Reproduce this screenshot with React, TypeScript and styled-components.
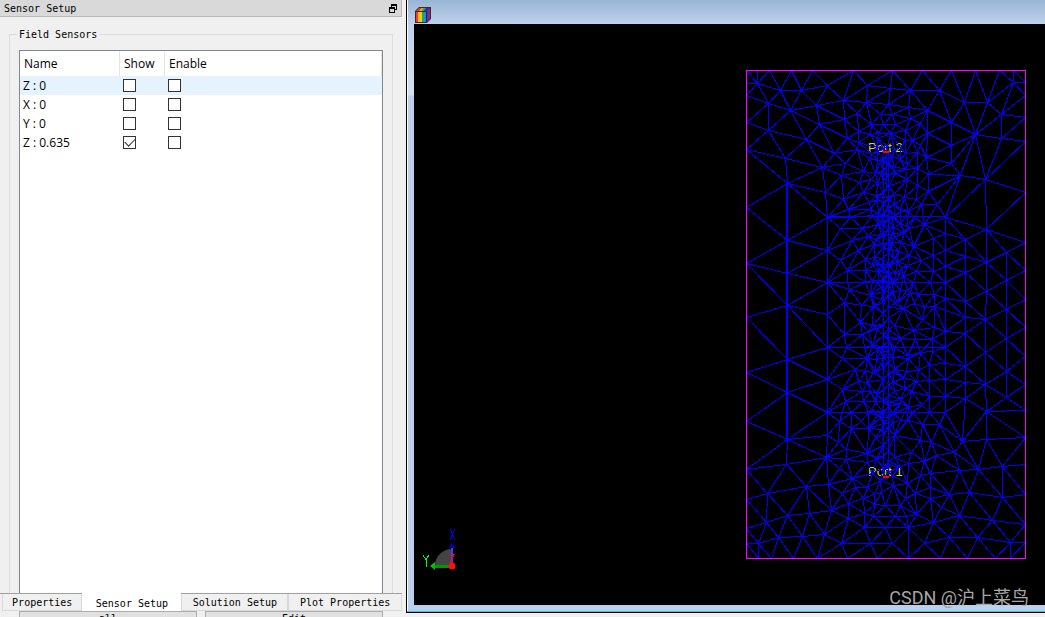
import React, { useState } from "react";
import styled, { createGlobalStyle } from "styled-components";

const GlobalStyle = createGlobalStyle`
  * { box-sizing: border-box; }
  body { margin: 0; background: #f0f0f0; overflow: hidden; }
`;

const mono = `"DejaVu Sans Mono", monospace`;
const sans = `"Open Sans", "Noto Sans", sans-serif`;

const Page = styled.main`
  display: grid;
  grid-template-columns: 402px minmax(0, 1fr);
  column-gap: 4px;
  height: 100vh;
  color: #000;
`;

const Dock = styled.section`
  display: flex;
  flex-direction: column;
  min-height: 0;
  overflow: hidden;
  font: 10px/16px ${mono};
`;

const DockTitle = styled.header`
  display: flex;
  align-items: center;
  justify-content: space-between;
  flex: none;
  height: 17px;
  padding: 0 4px;
  background: #d9d9d9;
  border: solid #b8b8b8;
  border-width: 0 1px 1px 0;
`;

const DockHeading = styled.h1`
  margin: 0;
  padding-top: 2px;
  font: inherit;
`;

const FloatButton = styled.button`
  display: flex;
  padding: 0;
  border: 0;
  background: none;
`;

const GroupWrap = styled.div`
  display: flex;
  flex: 1;
  min-height: 0;
  padding: 8px 9px 0;
`;

const Group = styled.fieldset`
  display: flex;
  flex: 1;
  min-width: 0;
  margin: 0;
  padding: 7px 9px 0;
  border: 1px solid #dcdcdc;
  border-bottom: 0;
`;

const Legend = styled.legend`
  margin-left: -2px;
  padding: 2px 2px 0;
`;

const TableFrame = styled.div`
  flex: 1;
  background: #fff;
  border: 1px solid #828790;
  border-bottom: 0;
`;

const SensorTable = styled.table`
  width: 100%;
  table-layout: fixed;
  border-collapse: separate;
  border-spacing: 0;
  font: 12px/18px ${sans};
`;

const HeadCell = styled.th<{ $width?: number }>`
  width: ${(p) => (p.$width ? `${p.$width}px` : "auto")};
  height: 25px;
  padding: 0 4px;
  border-right: 1px solid #e5e5e5;
  font-weight: 400;
  text-align: left;
`;

const Row = styled.tr<{ $current: boolean }>`
  height: 19px;
  background: ${(p) => (p.$current ? "#e5f3ff" : "#fff")};
`;

const Cell = styled.td`
  padding: 0 3px;
`;

const CheckCell = styled.td`
  padding: 0 3px;
`;

const Check = styled.input`
  display: block;
  appearance: none;
  width: 13px;
  height: 13px;
  margin: 0;
  border: 1px solid #333;
  background: #fff;
  &:checked::after {
    content: "";
    display: block;
    width: 9px;
    height: 5px;
    margin: 2px 0 0 1px;
    border: solid #333;
    border-width: 0 0 1px 1px;
    transform: translateY(-1px) rotate(-45deg);
  }
`;

const TabBar = styled.nav`
  display: flex;
  flex: none;
  height: 18px;
  padding-left: 2px;
  border-top: 1px solid #a0a0a0;
`;

const Tab = styled.button<{ $active: boolean; $grow: number }>`
  flex: ${(p) => p.$grow} 0 0;
  height: ${(p) => (p.$active ? 19 : 17)}px;
  margin-top: ${(p) => (p.$active ? -1 : 0)}px;
  padding: ${(p) => (p.$active ? "4px 1px 0" : "2px 0 0")};
  border: solid #d9d9d9;
  border-width: 0 ${(p) => (p.$active ? 0 : 1)}px 1px;
  background: ${(p) => (p.$active ? "#fff" : "#f0f0f0")};
  color: #000;
  font: inherit;
  line-height: 14px;
  white-space: nowrap;
`;

const ActionRow = styled.div`
  display: grid;
  grid-template-columns: 1fr 1fr;
  gap: 8px;
  flex: none;
  height: 6px;
  padding: 0 19px;
  overflow: hidden;
`;

const Action = styled.button`
  height: 18px;
  padding: 0 0 2px;
  border: 1px solid #adadad;
  background: #e1e1e1;
  color: #000;
  font: inherit;
  line-height: 14px;
`;

const MdiArea = styled.section`
  display: flex;
  flex-direction: column;
  position: relative;
  min-width: 0;
  min-height: 0;
  padding-bottom: 4px;
`;

const MdiWindow = styled.div`
  display: flex;
  flex: 1;
  flex-direction: column;
  min-height: 0;
  padding: 0 0 7px 6px;
  background: linear-gradient(#9ab5d5, #bdd3ec 24px, #d3e0f0 95px, #b9d1ea 96px);
  border: solid #000;
  border-width: 0 0 1px 1px;
  box-shadow: inset 0 -1px 0 #2fc4dc, inset 1px 0 0 #fff;
`;

const MdiTitle = styled.header`
  display: flex;
  align-items: flex-end;
  flex: none;
  height: 24px;
  padding: 0 2px 1px;
`;

const Viewport = styled.div`
  display: flex;
  flex: 1;
  align-items: flex-start;
  justify-content: space-between;
  min-height: 0;
  margin-left: 1px;
  padding: 46px 19px 0 6px;
  background: #000;
`;

const Axes = styled.svg`
  align-self: flex-end;
  flex: none;
  margin-bottom: 28px;
`;

const Drawing = styled.svg`
  display: block;
  flex: none;
`;

const Watermark = styled.span`
  position: absolute;
  right: 16px;
  bottom: 7px;
  color: #a6a6a6;
  font: 18px/24px Roboto, "Noto Sans CJK SC", sans-serif;
`;

type Point = [number, number];

const parse = (text: string): Point[] =>
  text.trim().split(/\s+/).map((pair) => pair.split(",").map(Number) as Point);

/* Mesh nodes, in board coordinates: edges first, then the inside from top to bottom. */
const nodes = parse(`
0,0 11,0 23,0 45,0 66,0 107,0 146,0 176,0 205,0 229,0 253,0 267,0 279,0
0,13 0,25 0,52 0,79 0,137 0,193 0,247 0,302 0,351 0,399 0,429 0,458 0,473 0,488
12,488 25,488 47,488 71,488 101,488 131,488 162,488 194,488 221,488 249,488 264,488 279,488
279,12 279,25 279,47 279,71 279,122 279,172 279,200 279,229 279,257 279,286 279,314 279,340 279,367 279,394 279,424 279,454 279,472
11,13 34,20 55,20 81,15 121,15 22,33 44,40 70,35 97,30 120,32 73,54 98,49 111,43 134,44 22,60 60,69 101,68 112,61 125,54 137,54
39,88 88,83 111,79 124,64 132,63 76,97 99,93 95,105 123,88 117,101 41,113 113,112 125,109 131,90 131,113 112,72 131,77
144,18 164,20 193,20 142,34 162,37 181,40 218,32 241,32 267,12 146,44 164,48 205,52 255,44 149,54 159,60 174,53 181,63 229,64 255,68
166,70 174,75 205,75 159,70 171,82 180,87 159,83 154,89 205,93 214,105 182,104 171,98 159,99 161,109 171,115 239,109 149,103 144,63
41,170 41,203 41,235 79,122 97,129 117,122 81,147 81,180 81,212 81,244 102,139 124,139 104,147 94,158 116,158 106,170 122,166 112,180
94,190 128,174 128,187 119,189 101,200 119,200 126,195 101,212 119,212 103,219 98,232 124,225 115,235 127,236 123,132 131,127 132,143 132,154
143,129 158,127 170,129 182,121 175,134 191,134 162,141 154,141 148,134 148,146 168,147 154,154 178,154 163,158 158,162 147,163 137,162
199,147 199,163 199,180 199,196 199,212 199,228 187,168 187,185 187,201 167,176 175,190 163,185 155,172 145,172 145,179 152,181 151,191
161,195 155,198 170,201 149,203 157,206 143,195 135,195 137,174 132,201 132,210 184,212 167,212 154,220 172,224 188,224 164,222 151,232
168,233 178,237 188,236 157,238 240,159 219,169 219,186 219,202 219,231 240,192 260,182 260,210 240,221 260,239
41,289 41,322 41,369 81,277 81,309 81,342 98,264 116,264 114,252 126,255 100,277 118,277 96,288 121,288 130,289 109,299 119,301 127,302
112,311 121,312 96,319 116,321 124,321 99,331 117,331 129,331 105,342 122,342 93,351 115,351 105,358 122,358 81,365 122,261
167,260 176,250 186,269 169,269 188,257 199,261 199,277 199,293 199,309 199,326 199,342 186,281 174,282 183,294 183,310 183,326 170,311
162,288 160,301 172,300 165,321 159,318 157,307 147,302 147,312 176,335 162,336 154,329 183,342 176,354 193,354 166,342 162,350 154,350
219,247 219,263 219,296 219,312 219,328 239,249 239,282 239,314 240,341 260,268 260,301 260,327 240,369
40,394 80,387 60,416 21,423 82,414 20,452 41,445 63,443 85,440 12,473 32,467 56,466 78,464 95,473 124,473 146,473 178,473
118,457 139,457 162,457 102,448 127,446 149,446 160,446 118,443 102,433 117,428 96,423 106,408 93,398 100,389 100,379 92,372
121,392 121,383 109,417 121,417 128,424 128,434 139,435 154,435 159,428 187,452 170,444 195,437 213,445 203,424 184,428 169,423
184,417 184,403 174,405 190,385 178,391 162,393 165,382 185,372 174,370 208,382 216,371 213,400 223,422 232,399 256,396 256,427
246,450 231,467 203,467 264,472
`);

/* Refined nodes along the feed line, with denser rings at both ports and each gap. */
const lineNodes: Point[] = [];
for (let y = 78, i = 0; y < 408; y += 11, i++) {
  lineNodes.push([137, y], [142, y + 5]);
  if (i % 2 === 0) lineNodes.push([131 - (i % 3), y + 3], [148 + ((i * 2) % 4), y + 1]);
}
for (const cy of [86, 147, 212, 277, 342, 405]) {
  for (let i = 0; i < 9; i++) {
    const a = i * 2.4;
    const r = 6 + i * 2;
    lineNodes.push([Math.round(140 + r * Math.cos(a)), Math.round(cy + r * Math.sin(a))]);
  }
}

/* Bowyer-Watson triangulation; returns the unique edges as one path. */
function meshPath(source: Point[]): string {
  const seen = new Set<string>();
  const pts = source.filter(([x, y]) => {
    const key = `${x},${y}`;
    if (seen.has(key)) return false;
    seen.add(key);
    return true;
  });
  const n = pts.length;
  const all: Point[] = [
    ...pts.map(([x, y], i): Point => [x + Math.sin(i * 7) * 0.001, y + Math.cos(i * 5) * 0.001]),
    [-90000, -90000],
    [90000, -90000],
    [0, 90000],
  ];
  type Tri = { v: number[]; x: number; y: number; r: number };
  const make = (a: number, b: number, c: number): Tri => {
    const [ax, ay] = all[a];
    const bx = all[b][0] - ax;
    const by = all[b][1] - ay;
    const cx = all[c][0] - ax;
    const cy = all[c][1] - ay;
    const d = 2 * (bx * cy - by * cx) || 1e-9;
    const b2 = bx * bx + by * by;
    const c2 = cx * cx + cy * cy;
    const ux = (cy * b2 - by * c2) / d;
    const uy = (bx * c2 - cx * b2) / d;
    return { v: [a, b, c], x: ax + ux, y: ay + uy, r: ux * ux + uy * uy };
  };
  let tris = [make(n, n + 1, n + 2)];
  for (let i = 0; i < n; i++) {
    const edges = new Map<string, number[]>();
    const keep: Tri[] = [];
    for (const t of tris) {
      const dx = all[i][0] - t.x;
      const dy = all[i][1] - t.y;
      if (dx * dx + dy * dy >= t.r) {
        keep.push(t);
        continue;
      }
      for (let k = 0; k < 3; k++) {
        const e = [t.v[k], t.v[(k + 1) % 3]].sort((p, q) => p - q);
        const key = e.join();
        if (edges.has(key)) edges.delete(key);
        else edges.set(key, e);
      }
    }
    edges.forEach(([a, b]) => keep.push(make(a, b, i)));
    tris = keep;
  }
  const lines = new Set<string>();
  for (const t of tris) {
    for (let k = 0; k < 3; k++) {
      const [a, b] = [t.v[k], t.v[(k + 1) % 3]].sort((p, q) => p - q);
      if (b < n) lines.add(`M${pts[a][0]} ${pts[a][1]}L${pts[b][0]} ${pts[b][1]}`);
    }
  }
  return [...lines].join("");
}

const mesh = meshPath([...nodes, ...lineNodes]);
const seams =
  "M40 113V369M81 147V342M199 147V342M81 146H199M81 212H199M81 277H199M81 342H199M137 82V403M140 82V120M142 82V403";

function MeshView() {
  return (
    <Drawing width="280" height="489" viewBox="0 0 280 489" role="img" aria-label="Mesh of the board with two ports">
      <g fill="#d2d232" fontFamily="Liberation Sans, sans-serif" fontSize="13">
        <text x="122" y="82">Port 2</text>
        <text x="122" y="406">Port 1</text>
      </g>
      <g transform="translate(.5 .5)" fill="none" stroke="#00f" shapeRendering="crispEdges">
        <path d={mesh} />
        <path d={seams} />
        <rect width="279" height="488" stroke="#f0f" />
      </g>
      <path d="M137 81h6v2h-6zM137 406h6v2h-6z" fill="#f00" />
    </Drawing>
  );
}

function AxisTriad() {
  return (
    <Axes width="40" height="50" viewBox="0 0 40 50" role="img" aria-label="Axes X, Y, Z">
      <path d="M32 38H15C15 29 23 22 32 22Z" fill="#444" />
      <g fill="none" shapeRendering="crispEdges">
        <path d="M30 2l5 11M35 2l-5 11" stroke="#00f" />
        <path d="M3 28l3 5 3-5M6 33v7" stroke="#0f0" />
        <path d="M32 39H14" stroke="#009800" strokeWidth="3" />
        <path d="M32 38V20" stroke="#4242e8" strokeWidth="2" />
        <path d="M29 27.5h6M34 28l-4 8" stroke="#f00" />
      </g>
      <path d="M10 39l5-4v8z" fill="#00c800" />
      <path d="M32 16l4 5h-8z" fill="#0000a8" />
      <circle cx="32" cy="39" r="3.5" fill="#f01414" />
    </Axes>
  );
}

function CubeIcon() {
  return (
    <svg width="16" height="16" viewBox="0 0 16 16" aria-hidden="true">
      <path d="M0 4L4 0H16V12L12 16H0Z" fill="#402828" />
      <path d="M1 5h2v10H1z" fill="#f04020" />
      <path d="M3 5h2v10H3z" fill="#ffb020" />
      <path d="M5 5h2v10H5z" fill="#d8d828" />
      <path d="M7 5h2v10H7z" fill="#28a848" />
      <path d="M9 5h2v10H9z" fill="#1890f0" />
      <path d="M1 4l3-3h2L4 4z" fill="#c84820" />
      <path d="M4 4l2-3h3L7 4z" fill="#d8b020" />
      <path d="M7 4l2-3h2L9 4z" fill="#30b050" />
      <path d="M9 4l2-3h4l-3 3z" fill="#1838d8" />
      <path d="M11 5l1-1v11h-1z" fill="#1018a0" />
      <path d="M12 4l3-3v11l-3 3z" fill="#803070" />
    </svg>
  );
}

const initial = [
  { name: "Z : 0", show: false, enable: false },
  { name: "X : 0", show: false, enable: false },
  { name: "Y : 0", show: false, enable: false },
  { name: "Z : 0.635", show: true, enable: false },
];

const tabs = [
  { label: "Properties", grow: 80 },
  { label: "Sensor Setup", grow: 99 },
  { label: "Solution Setup", grow: 107 },
  { label: "Plot Properties", grow: 114 },
];

export default function App() {
  const [sensors, setSensors] = useState(initial);
  const toggle = (index: number, key: "show" | "enable") =>
    setSensors((list) => list.map((s, i) => (i === index ? { ...s, [key]: !s[key] } : s)));

  return (
    <Page>
      <GlobalStyle />
      <Dock>
        <DockTitle>
          <DockHeading>Sensor Setup</DockHeading>
          <FloatButton type="button" aria-label="Float panel">
            <svg width="8" height="9" viewBox="0 0 8 9" fill="none" stroke="#000" shapeRendering="crispEdges">
              <path d="M2.5 3V.5h5v5H5M2 1.5h6M.5 3.5h5v5h-5zM0 4.5h6" />
            </svg>
          </FloatButton>
        </DockTitle>
        <GroupWrap>
          <Group>
            <Legend>Field Sensors</Legend>
            <TableFrame>
              <SensorTable>
                <thead>
                  <tr>
                    <HeadCell $width={100}>Name</HeadCell>
                    <HeadCell $width={45}>Show</HeadCell>
                    <HeadCell>Enable</HeadCell>
                  </tr>
                </thead>
                <tbody>
                  {sensors.map((s, i) => (
                    <Row key={s.name} $current={i === 0}>
                      <Cell>{s.name}</Cell>
                      <CheckCell>
                        <Check type="checkbox" aria-label={`Show ${s.name}`} checked={s.show} onChange={() => toggle(i, "show")} />
                      </CheckCell>
                      <CheckCell>
                        <Check type="checkbox" aria-label={`Enable ${s.name}`} checked={s.enable} onChange={() => toggle(i, "enable")} />
                      </CheckCell>
                    </Row>
                  ))}
                </tbody>
              </SensorTable>
            </TableFrame>
          </Group>
        </GroupWrap>
        <TabBar>
          {tabs.map((t, i) => (
            <Tab key={t.label} type="button" $active={i === 1} $grow={t.grow}>
              {t.label}
            </Tab>
          ))}
        </TabBar>
        <ActionRow>
          <Action type="button">all</Action>
          <Action type="button">Edit</Action>
        </ActionRow>
      </Dock>
      <MdiArea>
        <MdiWindow>
          <MdiTitle>
            <CubeIcon />
          </MdiTitle>
          <Viewport>
            <AxisTriad />
            <MeshView />
          </Viewport>
        </MdiWindow>
        <Watermark>CSDN @沪上菜鸟</Watermark>
      </MdiArea>
    </Page>
  );
}
